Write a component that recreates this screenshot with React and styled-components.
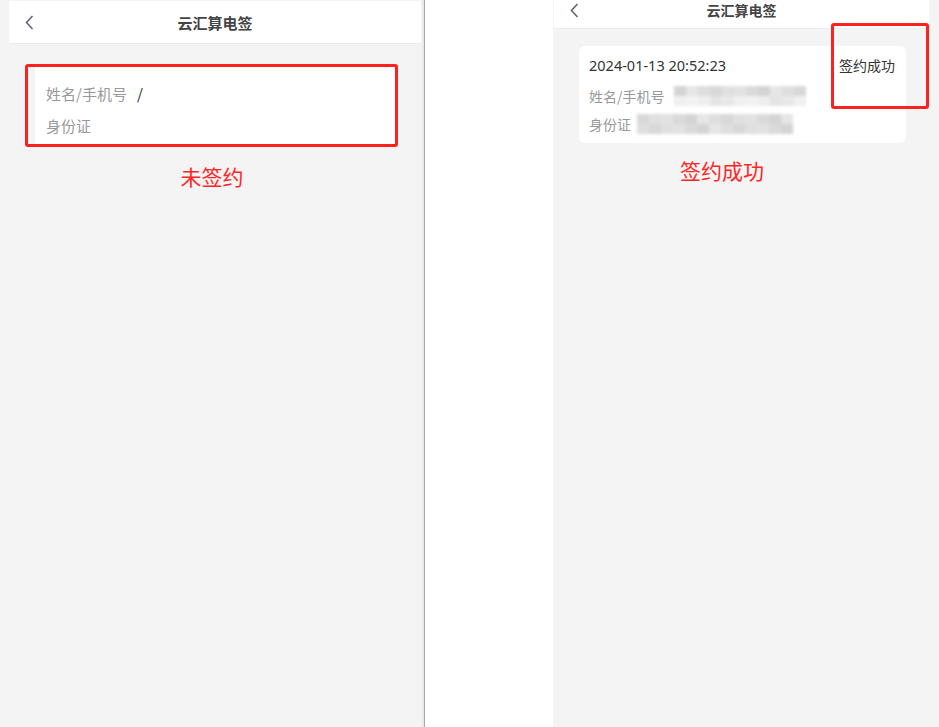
import React from "react";
import styled, { createGlobalStyle } from "styled-components";

const GlobalStyle = createGlobalStyle`
  html, body {
    margin: 0;
    padding: 0;
    background: #ffffff;
  }
  body {
    font-family: "Noto Sans", "Noto Sans CJK SC", sans-serif;
  }
`;

const Frame = styled.div`
  display: flex;
  width: 939px;
  height: 727px;
  overflow: hidden;
  background: #ffffff;
`;

const Phone = styled.div`
  position: relative;
  flex: none;
  width: ${(p) => p.$width}px;
  height: 100%;
  background: #f4f4f4;
  box-sizing: border-box;
  padding-top: ${(p) => p.$top}px;
`;

const LeftPhone = styled(Phone)`
  border-right: 1px solid #a8a8a8;
  box-shadow: inset -3px 0 3px -2px rgba(0, 0, 0, 0.08);
`;

const Gap = styled.div`
  flex: none;
  width: 128px;
`;

const Header = styled.div`
  display: grid;
  grid-template-columns: 1fr auto 1fr;
  align-items: center;
  height: ${(p) => p.$height}px;
  margin: ${(p) => p.$margin};
  padding: 0 16px;
  padding-bottom: ${(p) => p.$shift || 0}px;
  box-sizing: border-box;
  background: #ffffff;
  border-bottom: 1px solid #ececec;
`;

const Back = styled.svg`
  width: 9px;
  height: 15px;
  display: block;
`;

const Title = styled.div`
  font-family: "Noto Sans CJK SC", sans-serif;
  font-size: ${(p) => p.$size}px;
  font-weight: 700;
  color: #444;
`;

const EmptyCard = styled.div`
  margin: 23px 28px 0 35px;
  height: 78px;
  box-sizing: border-box;
  padding: 10px 11px 4px;
  background: #ffffff;
`;

const Row = styled.div`
  display: flex;
  align-items: center;
  height: ${(p) => p.$h}px;
  font-size: ${(p) => p.$size}px;
  font-family: "Noto Sans CJK SC", sans-serif;
`;

const Label = styled.span`
  color: #999;
`;

const Value = styled.span`
  color: #1f2a3a;
  margin-left: 10px;
`;

const Caption = styled.div`
  margin-top: ${(p) => p.$top}px;
  padding-left: ${(p) => p.$left}px;
  text-align: ${(p) => (p.$left ? "left" : "center")};
  line-height: 30px;
  font-size: 21px;
  font-family: "Noto Sans CJK SC", sans-serif;
  color: #ff2626;
`;

const RecordCard = styled.div`
  margin: 17px 0 0 26px;
  width: 327px;
  height: 97px;
  box-sizing: border-box;
  padding: 5px 11px 5px 10px;
  background: #ffffff;
  border-radius: 6px;
`;

const TopRow = styled.div`
  display: flex;
  align-items: center;
  justify-content: space-between;
  height: 28px;
  margin-bottom: 3px;
`;

const Time = styled.span`
  font-size: 14.5px;
  color: #333;
`;

const Status = styled.span`
  font-family: "Noto Sans CJK SC", sans-serif;
  font-size: 14px;
  color: #333;
`;

const Mosaic = styled.div`
  display: grid;
  grid-template-columns: repeat(${(p) => p.$cols}, 12px);
  grid-auto-rows: 10px;
  margin-left: ${(p) => p.$gap}px;
  filter: blur(1.8px);
`;

const Cell = styled.div`
  background: ${(p) => p.$shade};
`;

const Annotation = styled.div`
  position: absolute;
  left: ${(p) => p.$x}px;
  top: ${(p) => p.$y}px;
  width: ${(p) => p.$w}px;
  height: ${(p) => p.$h}px;
  box-sizing: border-box;
  border: 3px solid #ff2020;
  border-radius: 3px;
  pointer-events: none;
`;

const BackIcon = () => (
  <Back viewBox="0 0 9 15">
    <path d="M7.5 1 L1.5 7.5 L7.5 14" fill="none" stroke="#5b6170" strokeWidth="1.5" />
  </Back>
);

const topShades = ["#dedede", "#d4d4d4", "#e2e2e2", "#d8d8d8", "#e6e6e6", "#dadada", "#e0e0e0"];
const lowShades = ["#eeeeee", "#e8e8e8", "#f2f2f2", "#e4e4e4", "#f0f0f0"];

const makeCells = (cols, seed, soft) =>
  Array.from({ length: cols * 2 }, (_, i) => {
    const row = i < cols ? topShades : soft ? lowShades : topShades;
    return row[(i * 3 + seed) % row.length];
  });

const BlurBlock = ({ cols, gap, seed, soft }) => (
  <Mosaic $cols={cols} $gap={gap}>
    {makeCells(cols, seed, soft).map((c, i) => (
      <Cell key={i} $shade={c} />
    ))}
  </Mosaic>
);

export default function App() {
  return (
    <>
      <GlobalStyle />
      <Frame>
        <LeftPhone $width={425} $top={1}>
          <Header $height={43} $margin="0 3px 0 9px">
            <BackIcon />
            <Title $size={15}>云汇算电签</Title>
            <span />
          </Header>
          <EmptyCard>
            <Row $h={32} $size={15}>
              <Label>姓名/手机号</Label>
              <Value>/</Value>
            </Row>
            <Row $h={32} $size={15}>
              <Label>身份证</Label>
            </Row>
          </EmptyCard>
          <Caption $top={16}>未签约</Caption>
          <Annotation $x={25} $y={64} $w={373} $h={83} />
        </LeftPhone>
        <Gap />
        <Phone $width={386} $top={0}>
          <Header $height={29} $margin="0 10px 0 1px" $shift={8}>
            <BackIcon />
            <Title $size={14}>云汇算电签</Title>
            <span />
          </Header>
          <RecordCard>
            <TopRow>
              <Time>2024-01-13 20:52:23</Time>
              <Status>签约成功</Status>
            </TopRow>
            <Row $h={28} $size={14}>
              <Label>姓名/手机号</Label>
              <BlurBlock cols={11} gap={9} seed={1} soft />
            </Row>
            <Row $h={28} $size={14}>
              <Label>身份证</Label>
              <BlurBlock cols={13} gap={6} seed={3} />
            </Row>
          </RecordCard>
          <Caption $top={12} $left={127}>签约成功</Caption>
          <Annotation $x={278} $y={23} $w={98} $h={86} />
        </Phone>
      </Frame>
    </>
  );
}
